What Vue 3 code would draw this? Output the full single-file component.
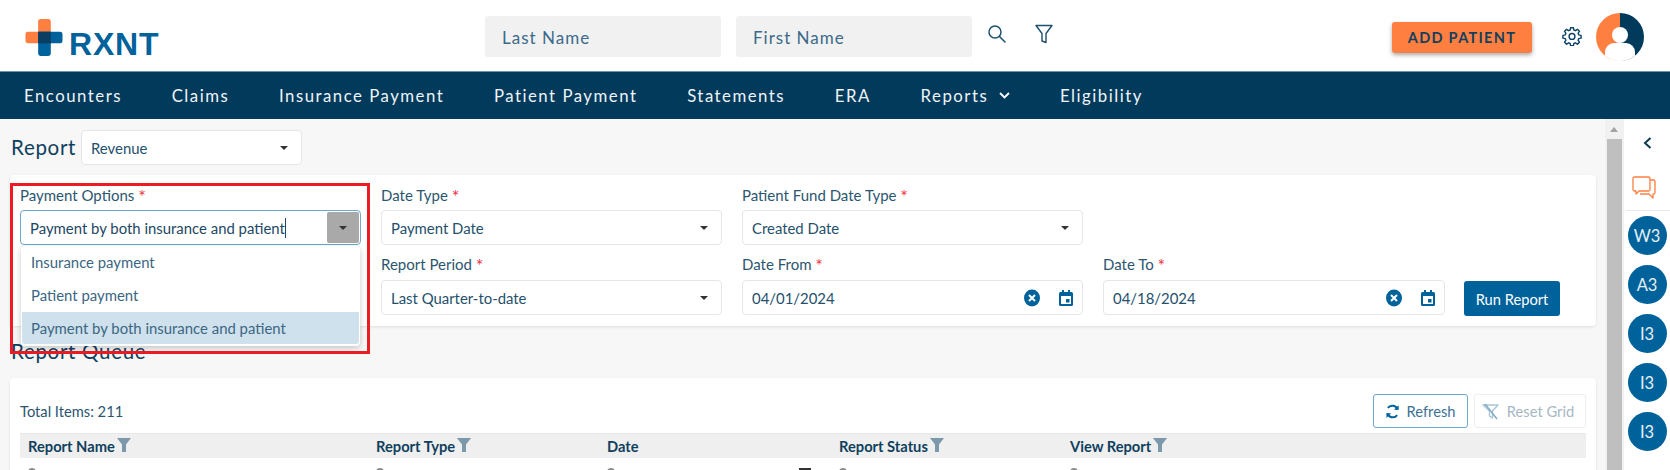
<script setup>
const navItems = [
  { label: 'Encounters' },
  { label: 'Claims' },
  { label: 'Insurance Payment' },
  { label: 'Patient Payment' },
  { label: 'Statements' },
  { label: 'ERA' },
  { label: 'Reports', caret: true },
  { label: 'Eligibility' },
]
const options = ['Insurance payment', 'Patient payment', 'Payment by both insurance and patient']
const columns = [
  { label: 'Report Name', filter: true, width: 348 },
  { label: 'Report Type', filter: true, width: 231 },
  { label: 'Date', filter: false, width: 232, cal: true },
  { label: 'Report Status', filter: true, width: 231 },
  { label: 'View Report', filter: true, width: 515 },
]
const badges = ['W3', 'A3', 'I3', 'I3', 'I3']
</script>

<template>
  <div class="page">
    <header class="top">
      <div class="logo">
        <svg class="logo-mark" width="38" height="37" viewBox="0 0 38 38">
          <path d="M13 2.500a2.500 2.500 0 0 1 2.500-2.500h8a2.500 2.500 0 0 1 2.500 2.500V25H2.500A2.500 2.500 0 0 1 0 22.500v-7A2.500 2.500 0 0 1 2.500 13H13z" fill="#ff7f41"/>
          <path d="M13 13h22.500a2.500 2.500 0 0 1 2.500 2.500v7a2.500 2.500 0 0 1-2.500 2.500H26v10.500a2.500 2.500 0 0 1-2.500 2.500h-8a2.500 2.500 0 0 1-2.500-2.500z" fill="#00629b"/>
          <rect x="13" y="13" width="13" height="12" fill="#0a3d62"/>
        </svg>
        <span class="logo-text">RXNT</span>
      </div>
      <div class="search">
        <div class="search-input">Last Name</div>
        <div class="search-input">First Name</div>
        <svg class="search-icon" width="20" height="20" viewBox="0 0 20 20" fill="none" stroke="#1d4f70" stroke-width="1.500">
          <circle cx="8" cy="8" r="6"/><path d="M12.500 12.500 18 18" stroke-linecap="round"/>
        </svg>
        <svg class="filter-icon" width="18" height="20" viewBox="0 0 18 20" fill="none" stroke="#1d4f70" stroke-width="1.400" stroke-linejoin="round">
          <path d="M1 1.500h16l-6 8v9l-4-1.500v-7.500z"/>
        </svg>
      </div>
      <button class="add-patient">ADD PATIENT</button>
      <svg class="gear" width="20" height="20" viewBox="0 0 24 24" fill="none" stroke="#0d4468" stroke-width="1.700" stroke-linejoin="round">
        <path d="M10.300 2h3.400l.5 2.800 1.900.8 2.400-1.600 2.400 2.400-1.600 2.400.8 1.900 2.800.5v3.400l-2.800.5-.8 1.900 1.600 2.400-2.400 2.400-2.400-1.600-1.900.8-.5 2.800h-3.400l-.5-2.800-1.900-.8-2.400 1.600-2.400-2.400 1.600-2.400-.8-1.900-2.800-.5v-3.400l2.800-.5.8-1.900-1.600-2.400 2.400-2.400 2.400 1.600 1.900-.8z"/>
        <circle cx="12" cy="12.500" r="3.500"/>
      </svg>
      <svg class="avatar" width="48" height="48" viewBox="0 0 48 48">
        <defs><clipPath id="avclip"><circle cx="24" cy="24" r="24"/></clipPath></defs>
        <g clip-path="url(#avclip)">
          <rect width="24" height="48" fill="#ff7f41"/>
          <rect x="24" width="24" height="48" fill="#023a5c"/>
          <circle cx="24" cy="22" r="8" fill="#fff"/>
          <rect x="9" y="30" width="30" height="24" rx="9" fill="#fff"/>
          <rect x="0" y="46" width="48" height="4" fill="#fff"/>
        </g>
      </svg>
    </header>

    <nav class="nav">
      <a v-for="item in navItems" :key="item.label" class="nav-item">
        {{ item.label }}
        <svg v-if="item.caret" class="nav-caret" width="11" height="7" viewBox="0 0 11 7" fill="none" stroke="#fff" stroke-width="1.800">
          <path d="M1 1l4.500 4.500L10 1"/>
        </svg>
      </a>
    </nav>

    <div class="body">
      <main class="main">
        <div class="report-row">
          <h2 class="h2">Report</h2>
          <div class="field select report-select"><span>Revenue</span><i class="caret"></i></div>
        </div>

        <section class="card filters">
          <div class="fcol">
            <label class="lbl">Payment Options <b>*</b></label>
            <div class="field select focused">
              <span class="typed">Payment by both insurance and patient</span>
              <span class="drop-btn"><i class="caret"></i></span>
            </div>
          </div>
          <div class="fcol">
            <label class="lbl">Date Type <b>*</b></label>
            <div class="field select"><span>Payment Date</span><i class="caret"></i></div>
          </div>
          <div class="fcol">
            <label class="lbl">Patient Fund Date Type <b>*</b></label>
            <div class="field select"><span>Created Date</span><i class="caret"></i></div>
          </div>
          <div class="fcol"></div>
          <div class="fcol"></div>

          <div class="fcol"></div>
          <div class="fcol">
            <label class="lbl">Report Period <b>*</b></label>
            <div class="field select"><span>Last Quarter-to-date</span><i class="caret"></i></div>
          </div>
          <div class="fcol">
            <label class="lbl">Date From <b>*</b></label>
            <div class="field select">
              <span>04/01/2024</span>
              <span class="date-icons">
                <svg width="16" height="18" viewBox="0 0 16 18"><ellipse cx="8" cy="9" rx="8" ry="8.500" fill="#00629b"/><path d="M5 6l6 6M11 6l-6 6" stroke="#fff" stroke-width="2"/></svg>
                <svg width="14" height="16" viewBox="0 0 14 16"><path fill-rule="evenodd" d="M3 0h2v2h4V0h2v2h1.500A1.500 1.500 0 0 1 14 3.500v11a1.500 1.500 0 0 1-1.500 1.500h-11A1.500 1.500 0 0 1 0 14.500v-11A1.500 1.500 0 0 1 1.500 2H3zM2 6v8h10V6z" fill="#00629b"/><rect x="7" y="9" width="3.500" height="3.500" fill="#00629b"/></svg>
              </span>
            </div>
          </div>
          <div class="fcol">
            <label class="lbl">Date To <b>*</b></label>
            <div class="field select">
              <span>04/18/2024</span>
              <span class="date-icons">
                <svg width="16" height="18" viewBox="0 0 16 18"><ellipse cx="8" cy="9" rx="8" ry="8.500" fill="#00629b"/><path d="M5 6l6 6M11 6l-6 6" stroke="#fff" stroke-width="2"/></svg>
                <svg width="14" height="16" viewBox="0 0 14 16"><path fill-rule="evenodd" d="M3 0h2v2h4V0h2v2h1.500A1.500 1.500 0 0 1 14 3.500v11a1.500 1.500 0 0 1-1.500 1.500h-11A1.500 1.500 0 0 1 0 14.500v-11A1.500 1.500 0 0 1 1.500 2H3zM2 6v8h10V6z" fill="#00629b"/><rect x="7" y="9" width="3.500" height="3.500" fill="#00629b"/></svg>
              </span>
            </div>
          </div>
          <div class="fcol run-col"><button class="run">Run Report</button></div>
        </section>

        <h2 class="h2 queue-title">Report Queue</h2>

        <section class="card queue">
          <div class="toolbar">
            <span class="total">Total Items: 211</span>
            <div class="tools">
              <button class="tool refresh">
                <svg width="15" height="15" viewBox="0 0 16 16" fill="none" stroke="#00629b" stroke-width="2">
                  <path d="M13.500 6A6 6 0 0 0 3 4.200"/><path d="M2.500 10A6 6 0 0 0 13 11.800"/>
                  <path d="M14.500 1.200v5h-5z" fill="#00629b" stroke="none"/><path d="M1.500 14.800v-5h5z" fill="#00629b" stroke="none"/>
                </svg>
                Refresh
              </button>
              <button class="tool reset">
                <svg width="18" height="17" viewBox="0 0 18 17" fill="none" stroke="#a9c6d9" stroke-width="1.400" stroke-linejoin="round">
                  <path d="M1 2h15l-5.500 6v7l-3-2v-5z"/><path d="M3 1l12 15" stroke="#7fa9c4"/>
                </svg>
                Reset Grid
              </button>
            </div>
          </div>
          <div class="grid-head">
            <div v-for="c in columns" :key="c.label" class="gh" :style="{ width: c.width + 'px' }">
              {{ c.label }}
              <svg v-if="c.filter" class="gfilter" width="14" height="14" viewBox="0 0 14 14"><path d="M0 0h14L9 6.500V14H5V6.500z" fill="#7c98ab"/></svg>
            </div>
          </div>
          <div class="grid-filter">
            <div v-for="c in columns" :key="c.label" class="gf" :style="{ width: c.width + 'px' }">
              <i class="dot"></i>
              <i v-if="c.cal" class="mini-cal"></i>
            </div>
          </div>
        </section>

        <div class="callout">
          <div class="dropdown">
            <div v-for="(o, i) in options" :key="o" class="opt" :class="{ active: i === 2 }">{{ o }}</div>
          </div>
        </div>
      </main>

      <div class="scrollbar">
        <i class="sb-arrow"></i>
        <div class="sb-thumb"></div>
      </div>

      <aside class="side">
        <svg class="side-chevron" width="9" height="12" viewBox="0 0 9 12" fill="none" stroke="#0d3b52" stroke-width="2"><path d="M7.500 1 2 6l5.500 5"/></svg>
        <svg class="chat" width="24" height="24" viewBox="0 0 24 24" fill="none" stroke="#ff7f41" stroke-width="1.300" stroke-linejoin="round">
          <path d="M2.500 1h14A1.500 1.500 0 0 1 18 2.500v11a1.500 1.500 0 0 1-1.500 1.500H7l-3 3v-3H2.500A1.500 1.500 0 0 1 1 13.500v-11A1.500 1.500 0 0 1 2.500 1z"/>
          <path d="M18 4h3.500A1.500 1.500 0 0 1 23 5.500v11a1.500 1.500 0 0 1-1.500 1.500H21v4l-4-4H8"/>
        </svg>
        <div class="side-sep"></div>
        <div class="badges">
          <div v-for="(b, i) in badges" :key="i" class="badge">{{ b }}</div>
        </div>
      </aside>
    </div>
  </div>
</template>

<style>
html, body { margin: 0; padding: 0; background: #fff; overflow: hidden; }
</style>

<style scoped>
.page {
  width: 1670px; height: 470px; overflow: hidden; display: flex; flex-direction: column;
  font-family: Lato, "Noto Sans", sans-serif; color: #2c5670; font-size: 15px;
}
.top { height: 71px; flex: none; display: flex; align-items: center; position: relative; background: #fff; box-sizing: border-box; padding-left: 25px; }
.logo { display: flex; align-items: flex-start; width: 460px; flex: none; height: 38px; margin-top: 4px; }
.logo-mark { flex: none; }
.logo-text { font-family: "Liberation Sans", sans-serif; font-weight: 700; font-size: 32px; line-height: 32px; margin: 9px 0 0 6px; color: #00629b; letter-spacing: .8px; }
.search { display: flex; align-items: center; gap: 15px; width: 907px; flex: none; margin-top: 2px; }
.search-input { width: 236px; height: 41px; background: #f1f1f1; border-radius: 3px; line-height: 43px; box-sizing: border-box; padding-left: 17px; font-size: 17px; letter-spacing: 1px; color: #3b6a8a; }
.search-icon { margin: -6px 0 0 0; }
.filter-icon { margin: -6px 0 0 13px; }
.add-patient { width: 140px; height: 31px; margin-top: 4px; border: 0; border-radius: 3px; background: #ff7f41; color: #123f5f; font: 700 14.500px Lato, sans-serif; letter-spacing: 1.300px; box-shadow: 0 2px 4px rgba(0,0,0,.35); padding: 0; flex: none; }
.gear { margin: 0 0 0 30px; flex: none; }
.avatar { margin-left: 14px; flex: none; margin-top: 3px; }

.nav { height: 48px; flex: none; background: #023a5c; border-top: 1px solid #6d93ab; box-sizing: border-box; display: flex; align-items: center; padding-left: 24px; gap: 49.700px; color: #eef4f8; font-size: 16.800px; letter-spacing: 1.500px; }
.nav-item { display: flex; align-items: center; white-space: nowrap; }
.nav-caret { margin-left: 11px; }

.body { flex: 1; min-height: 0; display: flex; background: #f7f7f7; }
.main { width: 1605px; flex: none; box-sizing: border-box; padding: 11px 9px 0 10px; position: relative; }
.h2 { margin: 0; font-size: 20.500px; font-weight: 400; color: #0f3f5e; letter-spacing: .7px; }
.report-row { display: flex; align-items: center; height: 35px; gap: 3px; }
.report-row .h2 { width: 67px; margin-left: 1px; margin-top: -2px; }
.field { background: #fff; border: 1px solid #e6e6e6; border-radius: 4px; height: 35px; box-sizing: border-box; display: flex; align-items: center; justify-content: space-between; padding: 0 13px 0 9px; font-size: 14.900px; color: #24506c; position: relative; }
.report-select { width: 221px; }
.caret { display: block; width: 0; height: 0; border-left: 4.500px solid transparent; border-right: 4.500px solid transparent; border-top: 4.500px solid #333; }
.card { background: #fff; border-radius: 4px; box-shadow: 0 1px 3px rgba(0,0,0,.1); }
.filters { margin-top: 10px; height: 151px; box-sizing: border-box; padding: 11px 0 0 10px; display: grid; grid-template-columns: 341px 341px 341px 342px 155px; column-gap: 20px; grid-template-rows: 60px 70px; row-gap: 0; align-content: start; }
.fcol { display: flex; flex-direction: column; min-width: 0; }
.filters .fcol:nth-child(n+6) { padding-top: 9px; }
.filters .fcol:nth-child(n+6) .lbl { height: 25px; }
.lbl { font-size: 15px; line-height: 19px; height: 24px; color: #2c5670; }
.lbl b { color: #ef3340; font-weight: 400; font-size: 18px; line-height: 0; vertical-align: -2px; }
.focused { border-color: #6fa8c9; color: #1d4763; }
.typed { border-right: 1px solid #1d4763; padding-right: 0; line-height: 20px; }
.drop-btn { position: absolute; right: 1px; top: 1px; bottom: 1px; width: 32px; background: #a9a9a9; border-radius: 2px; display: flex; align-items: center; justify-content: center; }
.date-icons { display: flex; align-items: center; gap: 19px; margin-right: -4px; }
.run-col { justify-content: flex-end; }
.run { width: 96px; height: 35px; border: 0; background: #00629b; color: #fff; border-radius: 3px; font: 14.700px Lato, sans-serif; padding: 0; margin-left: -1px; }
.queue-title { margin: 13px 0 1px 1px; line-height: 24px; height: 38px; }
.queue { height: 100px; box-sizing: border-box; padding: 16px 10px 0; }
.toolbar { display: flex; justify-content: space-between; align-items: center; height: 34px; }
.total { font-size: 14.700px; color: #2c5670; }
.tools { display: flex; gap: 6px; }
.tool { height: 34px; border-radius: 3px; background: #fff; display: flex; align-items: center; justify-content: center; gap: 7px; font: 14.700px Lato, sans-serif; padding: 0; box-sizing: border-box; }
.refresh { width: 95px; border: 1px solid #6fa8c9; color: #3d7394; padding-right: 1px; }
.reset { width: 112px; border: 1px solid #eeeeee; color: #a5b8c4; padding-right: 4px; }
.grid-head { display: flex; height: 25px; margin-top: 5px; background: #efefef; border-top: 1px solid #e8e8e8; box-sizing: border-box; }
.gh { display: flex; align-items: center; box-sizing: border-box; padding-left: 8px; font-weight: 700; font-size: 14.700px; color: #0f3f5e; flex: none; }
.gfilter { margin-left: 2px; margin-top: -3px; }
.grid-filter { display: flex; height: 14px; }
.gf { flex: none; position: relative; box-sizing: border-box; padding: 10px 0 0 8px; overflow: hidden; }
.dot { display: block; width: 8px; height: 8px; border-radius: 50%; background: #8a8a8a; }
.mini-cal { position: absolute; top: 10px; left: 200px; width: 12px; height: 8px; background: #333; }

.callout { position: absolute; left: 10px; top: 64px; width: 360px; height: 171px; border: 3px solid #ed1c24; box-sizing: border-box; pointer-events: none; }
.dropdown { position: absolute; left: 8px; top: 60px; width: 339px; height: 100px; background: #fff; border-radius: 4px; box-shadow: 0 2px 6px rgba(0,0,0,.22); display: flex; flex-direction: column; padding: 0 1px 1px; box-sizing: border-box; }
.opt { height: 33px; line-height: 33px; padding-left: 9px; font-size: 14.900px; color: #3b6683; flex: none; }
.opt.active { background: #cfe1ec; border-radius: 0 0 3px 3px; height: 32px; }

.scrollbar { width: 19px; flex: none; background: #f1f1f1; position: relative; box-sizing: border-box; padding: 20px 2px 0; }
.sb-arrow { position: absolute; top: 8px; left: 5px; width: 0; height: 0; border-left: 4.500px solid transparent; border-right: 4.500px solid transparent; border-bottom: 5px solid #a3a3a3; }
.sb-thumb { height: 100%; background: #bfbfbf; }
.side { flex: 1; background: #fff; display: flex; flex-direction: column; align-items: center; position: relative; }
.side-chevron { margin-top: 18px; }
.chat { margin-top: 27px; margin-left: -7px; align-self: center; }
.side-sep { width: 100%; height: 1px; background: #e8e8e8; margin: 10px 0 0 4px; flex: none; }
.badges { display: flex; flex-direction: column; gap: 10px; margin-top: 5px; }
.badge { width: 39px; height: 39px; border-radius: 50%; background: #00629b; color: #e6f0f6; display: flex; align-items: center; justify-content: center; font-size: 16.500px; }
</style>
